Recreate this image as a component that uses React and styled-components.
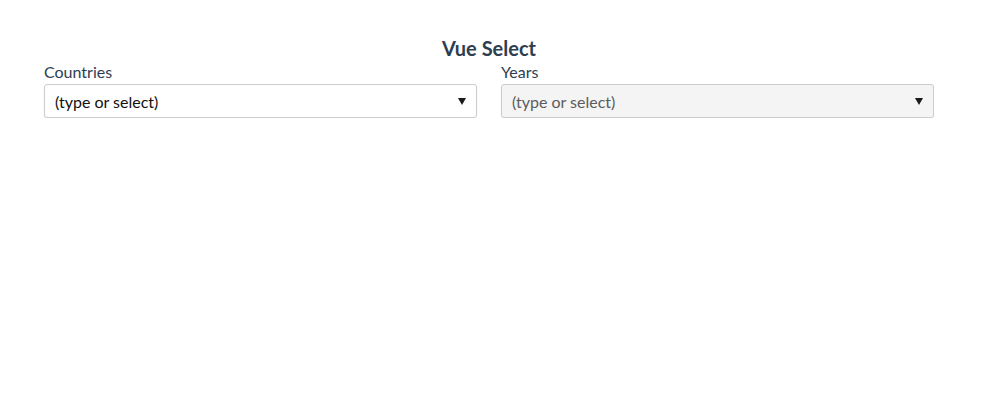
import React from 'react';
import styled, { createGlobalStyle } from 'styled-components';

const GlobalStyle = createGlobalStyle`
  body {
    margin: 0;
    background: #fff;
    font-family: Lato, "Noto Sans", sans-serif;
    color: #2c3e50;
  }
`;

const Page = styled.div`
  width: 890px;
  margin-left: 44px;
  padding-top: 36px;
`;

const Title = styled.h1`
  margin: 0;
  text-align: center;
  font-size: 20px;
  font-weight: 700;
  line-height: 24px;
  color: #2c3e50;
`;

const Fields = styled.div`
  display: grid;
  grid-template-columns: 1fr 1fr;
  column-gap: 24px;
`;

const Field = styled.div`
  display: flex;
  flex-direction: column;
`;

const Label = styled.label`
  font-size: 16px;
  line-height: 24px;
  color: #2c3e50;
`;

const SelectBox = styled.div`
  height: 34px;
  box-sizing: border-box;
  display: flex;
  align-items: center;
  justify-content: space-between;
  padding: 0 10px 0 10px;
  border: 1px solid #cdcdcd;
  border-radius: 3px;
  background: ${p => (p.disabled ? '#f4f4f4' : '#fff')};
  box-shadow: 0 1px 2px rgba(0, 0, 0, 0.07);
`;

const Placeholder = styled.span`
  font-size: 16px;
  color: ${p => (p.disabled ? '#5c5c5c' : '#111')};
`;

const Caret = styled.span`
  width: 0;
  height: 0;
  margin-top: 1px;
  border-left: 4.5px solid transparent;
  border-right: 4.5px solid transparent;
  border-top: 7px solid #1a1a1a;
`;

const Select = ({ label, disabled }) => (
  <Field>
    <Label>{label}</Label>
    <SelectBox disabled={disabled}>
      <Placeholder disabled={disabled}>(type or select)</Placeholder>
      <Caret />
    </SelectBox>
  </Field>
);

export default function App() {
  return (
    <>
      <GlobalStyle />
      <Page>
        <Title>Vue Select</Title>
        <Fields>
          <Select label="Countries" />
          <Select label="Years" disabled />
        </Fields>
      </Page>
    </>
  );
}
